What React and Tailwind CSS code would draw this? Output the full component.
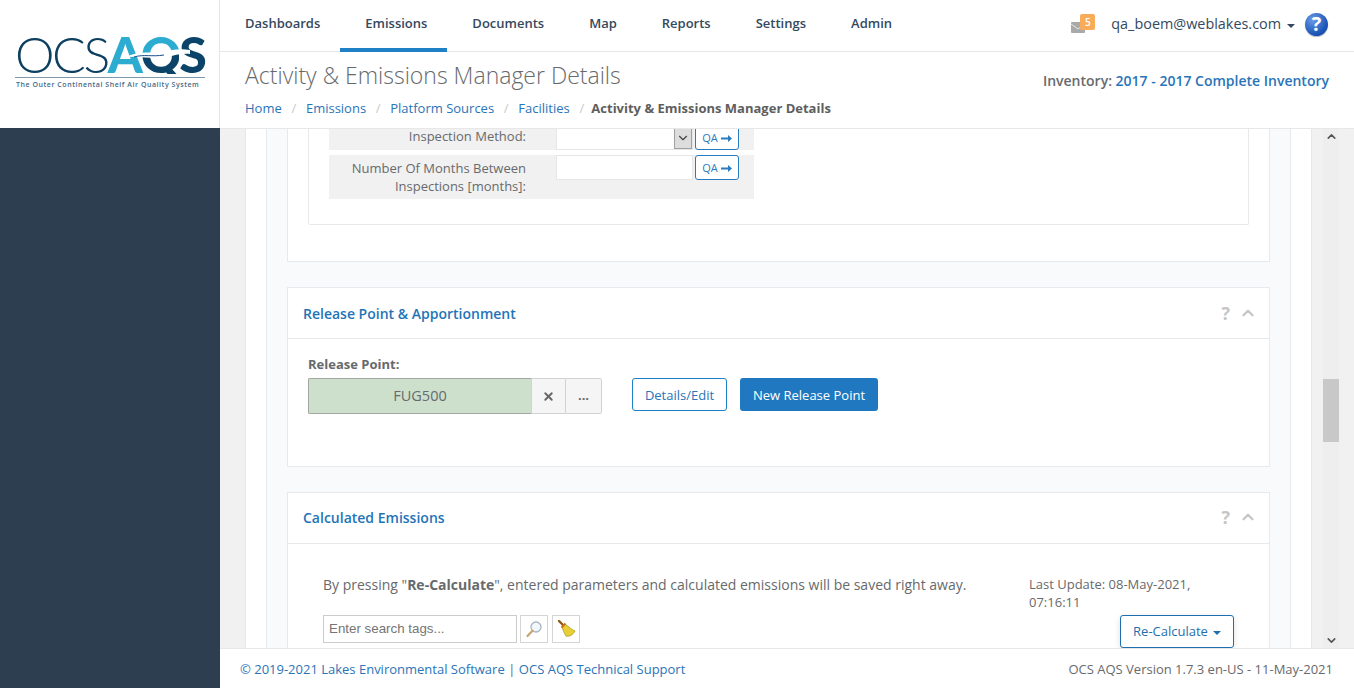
import React from 'react';
import { ChevronUp, ChevronDown, X } from 'lucide-react';

const navItems = ['Dashboards', 'Emissions', 'Documents', 'Map', 'Reports', 'Settings', 'Admin'];
const crumbs = ['Home', 'Emissions', 'Platform Sources', 'Facilities'];

const Logo = () => (
  <div className="relative w-[190px]">
    <div className="flex h-[40px] items-center whitespace-nowrap font-['Lato',sans-serif] text-[50px]">
      <span className="inline-block font-light leading-[40px] tracking-[-2.5px] text-[#0d3f61]">OCS</span>
      <span className="inline-block font-black leading-[40px] tracking-[-2px] text-[#2bacd0]">A</span>
      <span className="inline-block font-black leading-[40px] tracking-[-2px] bg-[linear-gradient(#2bacd0_50%,#0b4468_50%)] bg-clip-text text-transparent">Q</span>
      <span className="inline-block font-black leading-[40px] tracking-[-2px] text-[#0b4468]">S</span>
    </div>
    <svg className="absolute left-[83px] top-[11px]" width="96" height="16" viewBox="0 0 96 16">
      <path d="M26 13C38 6 50 8 62 7C72 6 80 3 92 5L92 9C80 8 74 12 62 13C50 14 38 10 26 13Z" fill="#ffffff" />
      <path d="M36 12C46 9 54 12 66 10" stroke="#16508a" strokeWidth="1" fill="none" />
    </svg>
    <div className="mt-[3px] border-t border-[#7f98ab] pt-[2px] pl-px font-['Open_Sans',sans-serif] text-[7px] font-semibold leading-[9px] tracking-[0.55px] whitespace-nowrap text-[#3f6a88]">
      The Outer Continental Shelf Air Quality System
    </div>
  </div>
);

const QaButton = () => (
  <button className="flex h-[25px] w-[44px] items-center justify-center gap-[3px] rounded-[3px] border border-[#2a7bbd] bg-white pt-[2px] text-[11px] text-[#2a7bbd]">
    QA
    <svg width="11" height="7" viewBox="0 0 11 7"><path d="M0 2.5H7V0L11 3.5L7 7V4.5H0Z" fill="#2a7bbd" /></svg>
  </button>
);

const CardHeader = ({ title, raised }) => (
  <div className={`flex h-[51px] items-center justify-between border-b border-[#e7eaec] pl-[15px] pr-[12px] ${raised ? 'pb-[2px]' : ''}`}>
    <span className="text-[14px] font-semibold text-[#1f74b8]">{title}</span>
    <div className="flex items-center gap-[9px] text-[#c6c6c6]">
      <span className="text-[18px] font-bold leading-none">?</span>
      <ChevronUp size={18} strokeWidth={3} />
    </div>
  </div>
);

const App = () => {
  return (
    <div className="flex h-[688px] w-[1354px] overflow-hidden bg-white font-['Open_Sans',sans-serif] text-[13px] text-[#676a6c]">
      <aside className="flex w-[220px] shrink-0 flex-col">
        <div className="flex h-[128px] items-center border-r border-[#e7e7e7] bg-white pl-[15px] pb-[6px]">
          <Logo />
        </div>
        <div className="flex-1 bg-[#2c3e50]"></div>
      </aside>

      <div className="flex min-w-0 flex-1 flex-col">
        <nav className="flex h-[52px] shrink-0 items-stretch border-b border-[#e7e7e7] bg-white">
          {navItems.map((item) => (
            <a
              key={item}
              className={`flex items-center pb-[3px] pl-[25px] pr-[20px] text-[13px] font-semibold text-[#34495e] ${
                item === 'Emissions' ? 'border-b-4 border-[#2080c6] pt-[2px] -mb-px' : ''
              }`}
            >
              {item}
            </a>
          ))}
          <div className="ml-auto flex items-center pr-[26px] pb-[3px]">
            <div className="relative mr-[16px] h-[16px] w-[24px]">
              <svg className="absolute left-0 top-[6px]" width="14" height="11" viewBox="0 0 14 11">
                <rect width="14" height="11" rx="1" fill="#a9a9a9" />
                <path d="M0 2L7 7L14 2" stroke="#e6e6e6" strokeWidth="1" fill="none" />
              </svg>
              <span className="absolute left-[9px] top-[-2px] flex h-[16px] w-[15px] items-center justify-center rounded-[2px] bg-[#f8ac59] text-[10px] font-semibold text-white">5</span>
            </div>
            <span className="text-[14.4px] text-[#34495e]">qa_boem@weblakes.com</span>
            <span className="ml-[6px] mt-[3px] border-x-4 border-t-4 border-x-transparent border-t-[#34495e]"></span>
            <div className="relative ml-[10px] flex h-[23px] w-[23px] items-center justify-center rounded-full bg-[radial-gradient(circle_at_35%_30%,#6d9be6,#1d56b8_65%,#123f8f)] text-[20px] font-bold leading-none text-white shadow-[0_1px_1px_#bbbbbb]">
              ?
            </div>
          </div>
        </nav>

        <header className="flex h-[77px] shrink-0 justify-between border-b border-[#e7e7e7] bg-white pl-[25px] pr-[25px]">
          <div>
            <h1 className="mt-[5px] text-[23px] font-light leading-[36px] text-[#676a6c]">Activity &amp; Emissions Manager Details</h1>
            <div className="mt-[6px] flex items-center text-[13px] leading-[18px]">
              {crumbs.map((c) => (
                <React.Fragment key={c}>
                  <a className="text-[#2a74b8]">{c}</a>
                  <span className="px-[9.7px] text-[#c9c9c9]">/</span>
                </React.Fragment>
              ))}
              <span className="-ml-[2.5px] font-bold text-[#5e5e5e]">Activity &amp; Emissions Manager Details</span>
            </div>
          </div>
          <div className="mt-[19px] text-[14px] font-semibold leading-[20px]">
            Inventory: <a className="text-[#2a74b8]">2017 - 2017 Complete Inventory</a>
          </div>
        </header>

        <div className="flex min-h-0 flex-1 overflow-hidden bg-[#f1f1f1] pl-[25px]">
          <div className="w-[1067px] shrink-0 border-x border-[#e7e7e7] bg-white px-[20px]">
            <div className="flow-root h-full border-x border-[#e7eaec] bg-[#f8fafc] px-[20px]">
              <section className="-mt-[31px] h-[164px] border-x border-b border-[#e7eaec] bg-white px-[20px]">
                <div className="h-[127px] rounded-b-[2px] border-x border-b border-[#e7eaec] px-[20px]">
                  <div className="flex h-[52px] w-[425px] items-end bg-[#f1f1f1]">
                    <label className="w-[197px] pb-[5px] text-right leading-[18px]">Inspection Method:</label>
                    <div className="ml-[30px] flex h-[25px] w-[137px] border border-[#e5e6e7] bg-white">
                      <span className="ml-auto flex w-[18px] items-center justify-center border border-[#a0a0a0] bg-[#dddddd]">
                        <ChevronDown size={14} className="text-[#444444]" />
                      </span>
                    </div>
                    <div className="ml-[2px]"><QaButton /></div>
                  </div>
                  <div className="mt-[5px] flex h-[44px] w-[425px] items-start bg-[#f1f1f1]">
                    <label className="w-[197px] pt-[4px] text-right leading-[18px]">Number Of Months Between Inspections [months]:</label>
                    <input className="ml-[30px] h-[25px] w-[137px] border border-[#e5e6e7] bg-white" />
                    <div className="ml-[2px]"><QaButton /></div>
                  </div>
                </div>
              </section>

              <section className="mt-[25px] h-[180px] border border-[#e7eaec] bg-white">
                <CardHeader title="Release Point & Apportionment" />
                <div className="px-[20px] pt-[16px]">
                  <label className="block text-[13px] font-bold leading-[18px] text-[#676a6c]">Release Point:</label>
                  <div className="mt-[5px] flex items-start">
                    <div className="flex h-[36px] w-[294px] overflow-hidden rounded-[2px]">
                      <div className="flex w-[223px] items-center justify-center border border-[#a5a5a5] border-r-0 bg-[#cce0cc] text-[14.5px]">FUG500</div>
                      <div className="flex w-[34px] items-center justify-center border border-r-0 border-[#d2d2d2] bg-[#f5f5f5] text-[#666666]">
                        <X size={13} strokeWidth={3.5} />
                      </div>
                      <div className="flex w-[37px] items-center justify-center rounded-r-[2px] border border-[#d2d2d2] bg-[#f5f5f5] font-bold">...</div>
                    </div>
                    <button className="ml-[30px] h-[33px] w-[95px] rounded-[3px] border border-[#2080c6] bg-white pt-[2px] text-[13px] text-[#2a74b8]">Details/Edit</button>
                    <button className="ml-[13px] h-[33px] w-[138px] rounded-[3px] bg-[#2079c0] pt-[2px] text-[13px] text-white">New Release Point</button>
                  </div>
                </div>
              </section>

              <section className="mt-[25px] h-[300px] border border-[#e7eaec] bg-white">
                <CardHeader title="Calculated Emissions" raised />
                <div className="flex justify-between pl-[35px] pr-[35px] pt-[31px]">
                  <div>
                    <p className="text-[14px] leading-[20px]">By pressing "<b>Re-Calculate</b>", entered parameters and calculated emissions will be saved right away.</p>
                    <div className="mt-[20px] flex gap-[3px]">
                      <input
                        placeholder="Enter search tags..."
                        className="h-[28px] w-[194px] border border-[#cccccc] px-[5px] pb-[2px] font-['Liberation_Sans',sans-serif] text-[13.33px] placeholder:text-[#757575]"
                      />
                      <button className="flex h-[28px] w-[28px] items-center justify-center border border-[#d5d5d5] bg-white">
                        <svg width="18" height="18" viewBox="0 0 18 18">
                          <circle cx="11" cy="7" r="5" fill="#f2f7fb" stroke="#a9b6c0" strokeWidth="1.3" />
                          <path d="M7.5 10.8L2.5 16" stroke="#c9a56b" strokeWidth="2.2" strokeLinecap="round" />
                        </svg>
                      </button>
                      <button className="ml-px flex h-[28px] w-[28px] items-center justify-center border border-[#d5d5d5] bg-white">
                        <svg width="20" height="20" viewBox="0 0 20 20">
                          <path d="M3 2L8 7" stroke="#8a5a14" strokeWidth="2.4" strokeLinecap="round" />
                          <path d="M6 8L9 5L13 8C15 10 17 11 19 12C17 16 13 18 10 17C8 14 7 11 6 8Z" fill="#e8cf35" stroke="#b39a1c" strokeWidth="0.8" />
                          <path d="M5.5 8.5L9.5 4.5" stroke="#c8701a" strokeWidth="2" />
                        </svg>
                      </button>
                    </div>
                  </div>
                  <div className="flex w-[205px] flex-col">
                    <p className="text-[13px] leading-[18px]">Last Update: 08-May-2021, 07:16:11</p>
                    <button className="ml-[91px] mt-[4px] flex h-[33px] w-[114px] items-center justify-center gap-[5px] rounded-[3px] border border-[#1f6fae] bg-white text-[13px] text-[#1f6fae] shadow-[0_2px_6px_rgba(0,0,0,0.12)]">
                      Re-Calculate
                      <span className="mt-[2px] border-x-4 border-t-4 border-x-transparent border-t-[#1f6fae]"></span>
                    </button>
                  </div>
                </div>
              </section>
            </div>
          </div>

          <div className="ml-[11px] flex w-[16px] flex-col items-center bg-[#eeeeee] pt-[1px] text-[#555555]">
            <ChevronUp size={13} strokeWidth={3} />
            <div className="mt-[236px] h-[63px] w-full bg-[#c8c8c8]"></div>
            <ChevronDown size={13} strokeWidth={3} className="mt-auto mb-px" />
          </div>
        </div>

        <footer className="flex h-[40px] shrink-0 items-center justify-between border-t border-[#e7e7e7] bg-white pl-[20px] pr-[21px] pt-[2px] text-[13px]">
          <div>
            <a className="text-[#2a74b8]">© 2019-2021 Lakes Environmental Software</a>
            <span className="px-[3.5px]">|</span>
            <a className="text-[#2a74b8]">OCS AQS Technical Support</a>
          </div>
          <span>OCS AQS Version 1.7.3 en-US - 11-May-2021</span>
        </footer>
      </div>
    </div>
  );
};

export default App;
